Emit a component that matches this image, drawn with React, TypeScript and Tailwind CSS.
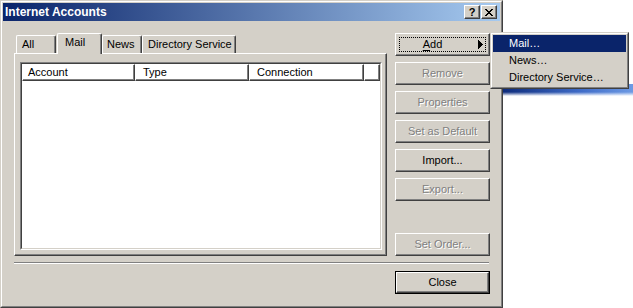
import React from "react";

const raised =
  "border border-t-white border-l-white border-r-[#404040] border-b-[#404040] shadow-[inset_-1px_-1px_0_#808080]";

function Btn({
  children,
  disabled,
  extra,
}: {
  children: React.ReactNode;
  disabled?: boolean;
  extra?: string;
}) {
  return (
    <div
      className={
        "relative flex h-[23px] w-[95px] items-center justify-center bg-[#D4D0C8] " +
        raised +
        " " +
        (disabled ? "text-[#808080] [text-shadow:1px_1px_0_#ffffff]" : "text-black") +
        (extra ? " " + extra : "")
      }
    >
      {children}
    </div>
  );
}

function HeaderCell({ label, className }: { label: string; className: string }) {
  return (
    <div
      className={
        "h-[17px] shrink-0 border border-t-white border-l-white border-r-[#404040] border-b-[#404040] shadow-[inset_-1px_-1px_0_#808080] pl-[5px] pt-[1px] leading-[13px] " +
        className
      }
    >
      {label}
    </div>
  );
}

export default function App() {
  return (
    <div className="relative h-[308px] w-[633px] overflow-hidden bg-white font-['Liberation_Sans',Arial,sans-serif] text-[11px] leading-[13px] text-black">
      {/* desktop artifact behind */}
      <div className="absolute left-[503px] top-[84px] h-[12px] w-[130px] bg-[linear-gradient(to_right,#0e2c7c,#3f6cc8_60%,#6d9ae4)]" />
      <div className="absolute left-[503px] top-[92px] h-[4px] w-[130px] bg-[linear-gradient(to_bottom,rgba(255,255,255,0),#ffffff)]" />

      {/* window */}
      <div className="relative h-[308px] w-[503px] border border-t-[#D4D0C8] border-l-[#D4D0C8] border-r-[#404040] border-b-[#404040] bg-[#D4D0C8]">
        <div className="flex h-full flex-col border border-t-white border-l-white border-r-[#808080] border-b-[#808080] p-px">
          {/* title bar */}
          <div className="flex h-[18px] shrink-0 items-center bg-[linear-gradient(to_right,#0A246A,#A6CAF0)] pl-[2px] pr-[3px]">
            <div className="flex-1 text-[12px] font-bold leading-[14px] text-white">
              Internet Accounts
            </div>
            <div className="flex items-center gap-[1px]">
              <div
                className={
                  "flex h-[14px] w-[16px] items-center justify-center bg-[#D4D0C8] text-[11px] font-bold leading-[12px] " +
                  raised
                }
              >
                ?
              </div>
              <div
                className={
                  "flex h-[14px] w-[16px] items-center justify-center bg-[#D4D0C8] " + raised
                }
              >
                <svg width="8" height="7" viewBox="0 0 8 7" shapeRendering="crispEdges">
                  <g fill="#000">
                    <rect x="0" y="0" width="2" height="1" />
                    <rect x="6" y="0" width="2" height="1" />
                    <rect x="1" y="1" width="2" height="1" />
                    <rect x="5" y="1" width="2" height="1" />
                    <rect x="2" y="2" width="4" height="1" />
                    <rect x="3" y="3" width="2" height="1" />
                    <rect x="2" y="4" width="4" height="1" />
                    <rect x="1" y="5" width="2" height="1" />
                    <rect x="5" y="5" width="2" height="1" />
                    <rect x="0" y="6" width="2" height="1" />
                    <rect x="6" y="6" width="2" height="1" />
                  </g>
                </svg>
              </div>
            </div>
          </div>

          {/* body */}
          <div className="flex flex-1 flex-col pl-[11px] pr-[10px] pt-[12px]">
            <div className="flex gap-[8px]">
              {/* left column: tabs + panel */}
              <div className="flex w-[373px] flex-col">
                <div className="flex h-[20px] items-end pl-[2px]">
                  <div className="flex h-[18px] w-[40px] rounded-tl-[2px] rounded-tr-[2px] border-l border-t border-r border-l-white border-t-white border-r-[#404040] shadow-[inset_-1px_0_0_#808080] pl-[5px] pt-[2px]">
                    All
                  </div>
                  <div className="relative z-10 -mb-px ml-[1px] flex h-[21px] w-[45px] rounded-tl-[2px] rounded-tr-[2px] border-l border-t border-r border-l-white border-t-white border-r-[#404040] bg-[#D4D0C8] shadow-[inset_-1px_0_0_#808080] pl-[7px] pt-[2px]">
                    Mail
                  </div>
                  <div className="flex h-[18px] w-[40px] rounded-tl-[2px] rounded-tr-[2px] border-l border-t border-r border-l-white border-t-white border-r-[#404040] shadow-[inset_-1px_0_0_#808080] pl-[4px] pt-[2px]">
                    News
                  </div>
                  <div className="flex h-[18px] w-[94px] rounded-tl-[2px] rounded-tr-[2px] border-l border-t border-r border-l-white border-t-white border-r-[#404040] shadow-[inset_-1px_0_0_#808080] pl-[5px] pt-[2px]">
                    Directory Service
                  </div>
                </div>
                <div className="h-[203px] border border-t-white border-l-white border-r-[#404040] border-b-[#404040] pb-[4px] pl-[5px] pr-[3px] pt-[8px] shadow-[inset_-1px_-1px_0_#808080]">
                  {/* list view */}
                  <div className="h-[188px] w-[362px] border border-t-[#808080] border-l-[#808080] border-r-white border-b-white">
                    <div className="h-full w-full border border-t-[#404040] border-l-[#404040] border-r-[#D4D0C8] border-b-[#D4D0C8] bg-white">
                      <div className="flex">
                        <HeaderCell label="Account" className="w-[113px]" />
                        <HeaderCell label="Type" className="w-[114px] pl-[7px]" />
                        <HeaderCell label="Connection" className="w-[115px] pl-[7px]" />
                        <HeaderCell label="" className="flex-1" />
                      </div>
                    </div>
                  </div>
                </div>
              </div>

              {/* right column: buttons */}
              <div className="flex h-[223px] w-[95px] flex-col gap-[6px]">
                <Btn>
                  <div className="pointer-events-none absolute inset-[3px] border border-dotted border-black" />
                  <span className="mr-[20px]">
                    <span className="underline underline-offset-[2px]">A</span>dd
                  </span>
                  <svg
                    className="absolute right-[6px] top-[6px]"
                    width="5"
                    height="9"
                    viewBox="0 0 5 9"
                    shapeRendering="crispEdges"
                  >
                    <g fill="#000">
                      <rect x="0" y="0" width="1" height="9" />
                      <rect x="1" y="1" width="1" height="7" />
                      <rect x="2" y="2" width="1" height="5" />
                      <rect x="3" y="3" width="1" height="3" />
                      <rect x="4" y="4" width="1" height="1" />
                    </g>
                  </svg>
                </Btn>
                <Btn disabled>Remove</Btn>
                <Btn disabled>Properties</Btn>
                <Btn disabled>Set as Default</Btn>
                <Btn>Import...</Btn>
                <Btn disabled>Export...</Btn>
                <div className="mt-auto">
                  <Btn disabled>Set Order...</Btn>
                </div>
              </div>
            </div>

            {/* separator */}
            <div className="mt-[6px] h-[2px] w-[475px] border-t border-b border-t-[#808080] border-b-white" />

            <div className="mt-[7px] flex justify-end">
              <div className="h-[23px] w-[95px] border border-black">
                <div className="flex h-full w-full items-center justify-center border border-t-white border-l-white border-r-[#404040] border-b-[#404040] bg-[#D4D0C8] shadow-[inset_-1px_-1px_0_#808080]">
                  Close
                </div>
              </div>
            </div>
          </div>
        </div>
      </div>

      {/* popup menu */}
      <div className="absolute left-[490px] top-[32px] z-20 h-[57px] w-[139px] border border-t-[#D4D0C8] border-l-[#D4D0C8] border-r-[#404040] border-b-[#404040] bg-[#D4D0C8]">
        <div className="h-full border border-t-white border-l-white border-r-[#808080] border-b-[#808080] p-px">
          <div className="flex h-[17px] items-center bg-[#0A246A] pl-[16px] text-white">Mail…</div>
          <div className="flex h-[17px] items-center pl-[16px]">News…</div>
          <div className="flex h-[17px] items-center pl-[16px]">Directory Service…</div>
        </div>
      </div>
    </div>
  );
}
